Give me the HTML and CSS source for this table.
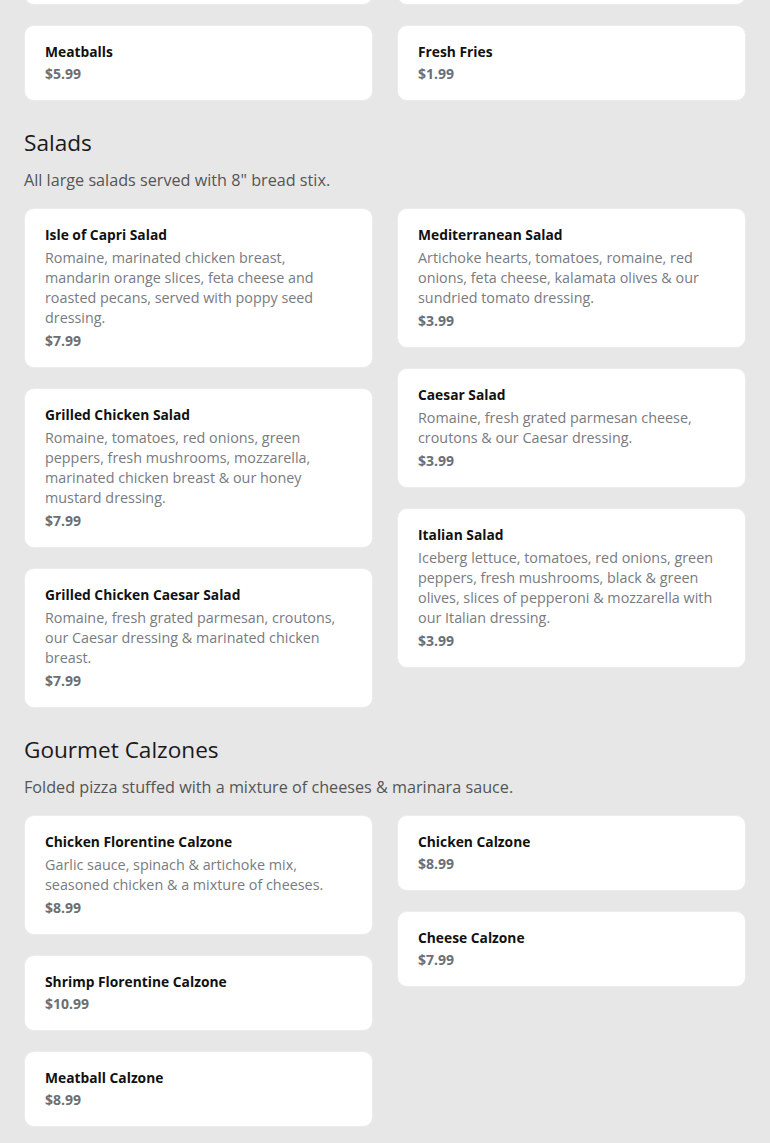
FILE: index.html
```html
<!DOCTYPE html>
<html lang="en">
<head>
<meta charset="utf-8">
<title>Menu</title>
<link rel="stylesheet" href="styles.css">
</head>
<body>
<main class="menu">
  <section class="section section-first">
    <div class="grid">
      <div class="col">
        <div class="card"><div class="title">Garlic Knots</div><div class="price">$3.99</div></div>
        <div class="card"><div class="title">Meatballs</div><div class="price">$5.99</div></div>
      </div>
      <div class="col">
        <div class="card"><div class="title">Bread Stix</div><div class="price">$3.99</div></div>
        <div class="card"><div class="title">Fresh Fries</div><div class="price">$1.99</div></div>
      </div>
    </div>
  </section>

  <section class="section">
    <h2 class="heading">Salads</h2>
    <p class="intro">All large salads served with 8" bread stix.</p>
    <div class="grid">
      <div class="col">
        <div class="card">
          <div class="title">Isle of Capri Salad</div>
          <div class="desc">Romaine, marinated chicken breast, mandarin orange slices, feta cheese and roasted pecans, served with poppy seed dressing.</div>
          <div class="price">$7.99</div>
        </div>
        <div class="card">
          <div class="title">Grilled Chicken Salad</div>
          <div class="desc">Romaine, tomatoes, red onions, green peppers, fresh mushrooms, mozzarella, marinated chicken breast &amp; our honey mustard dressing.</div>
          <div class="price">$7.99</div>
        </div>
        <div class="card">
          <div class="title">Grilled Chicken Caesar Salad</div>
          <div class="desc">Romaine, fresh grated parmesan, croutons, our Caesar dressing &amp; marinated chicken breast.</div>
          <div class="price">$7.99</div>
        </div>
      </div>
      <div class="col">
        <div class="card">
          <div class="title">Mediterranean Salad</div>
          <div class="desc">Artichoke hearts, tomatoes, romaine, red onions, feta cheese, kalamata olives &amp; our sundried tomato dressing.</div>
          <div class="price">$3.99</div>
        </div>
        <div class="card">
          <div class="title">Caesar Salad</div>
          <div class="desc">Romaine, fresh grated parmesan cheese, croutons &amp; our Caesar dressing.</div>
          <div class="price">$3.99</div>
        </div>
        <div class="card">
          <div class="title">Italian Salad</div>
          <div class="desc">Iceberg lettuce, tomatoes, red onions, green peppers, fresh mushrooms, black &amp; green olives, slices of pepperoni &amp; mozzarella with our Italian dressing.</div>
          <div class="price">$3.99</div>
        </div>
      </div>
    </div>
  </section>

  <section class="section">
    <h2 class="heading">Gourmet Calzones</h2>
    <p class="intro">Folded pizza stuffed with a mixture of cheeses &amp; marinara sauce.</p>
    <div class="grid">
      <div class="col">
        <div class="card">
          <div class="title">Chicken Florentine Calzone</div>
          <div class="desc">Garlic sauce, spinach &amp; artichoke mix, seasoned chicken &amp; a mixture of cheeses.</div>
          <div class="price">$8.99</div>
        </div>
        <div class="card"><div class="title">Shrimp Florentine Calzone</div><div class="price">$10.99</div></div>
        <div class="card"><div class="title">Meatball Calzone</div><div class="price">$8.99</div></div>
      </div>
      <div class="col">
        <div class="card"><div class="title">Chicken Calzone</div><div class="price">$8.99</div></div>
        <div class="card"><div class="title">Cheese Calzone</div><div class="price">$7.99</div></div>
      </div>
    </div>
  </section>
</main>
</body>
</html>
```

FILE: styles.css
```css
html, body {
  margin: 0;
  padding: 0;
  background: #e7e7e7;
}

body {
  font-family: "Open Sans", "Liberation Sans", sans-serif;
  color: #1a1a1a;
}

.menu {
  padding: 0 24px 40px;
}

.section-first {
  margin-top: -71px;
}

.section + .section {
  padding-top: 26px;
}

.heading {
  margin: 0;
  font-size: 22.6px;
  line-height: 32px;
  font-weight: 400;
  color: #1a1a1a;
}

.intro {
  margin: 9px 0 16px;
  font-size: 16.2px;
  line-height: 24px;
  color: #555555;
}

.grid {
  display: grid;
  grid-template-columns: 1fr 1fr;
  column-gap: 24px;
  align-items: start;
}

.col {
  display: flex;
  flex-direction: column;
  gap: 20px;
}

.card {
  background: #ffffff;
  border: 1px solid #ececec;
  border-radius: 10px;
  padding: 16px 20px;
}

.title {
  font-size: 13.8px;
  line-height: 20px;
  font-weight: 700;
  color: #111111;
}

.desc {
  margin-top: 3px;
  font-size: 14.35px;
  line-height: 20px;
  color: #787b7f;
}

.price {
  margin-top: 3px;
  font-size: 14px;
  line-height: 20px;
  font-weight: 700;
  color: #6b6f75;
}

.title + .price {
  margin-top: 2px;
}
```
